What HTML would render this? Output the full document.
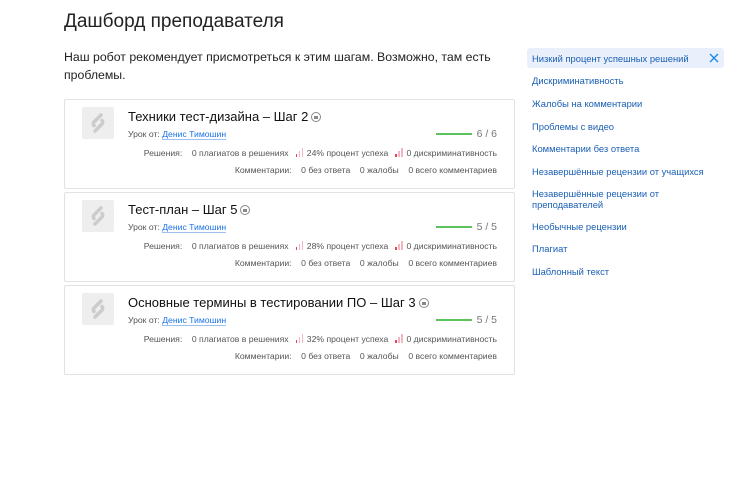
<!DOCTYPE html>
<html><head><meta charset="utf-8"><style>
*{margin:0;padding:0;box-sizing:border-box}
body{width:751px;height:483px;background:#fff;font-family:"Liberation Sans",Arial,sans-serif;color:#222;position:relative;overflow:hidden}
.a{position:absolute;white-space:nowrap}
h1{position:absolute;left:64px;top:11px;font-size:19px;font-weight:normal;color:#222}
.intro{position:absolute;left:64px;top:48px;width:430px;font-size:12.3px;line-height:18px;color:#222}
.card{position:absolute;left:64px;width:451px;height:90px;border:1px solid #e2e2e2;border-radius:2px}
.ic{position:absolute;left:17px;top:7px;width:32px;height:32px;background:#eee;border-radius:2px}
.t{position:absolute;left:63px;top:9px;font-size:13px;color:#111;white-space:nowrap}
.lk{display:inline-block;width:10px;height:10px;border:1px solid #888;border-radius:50%;vertical-align:-1px;margin-left:3px;position:relative}
.lk:after{content:"";position:absolute;left:2px;top:3px;width:4px;height:3px;background:#888}
.s{font-size:8.65px;color:#555}
.au{left:63px;top:29px}
.au span{color:#1a73e8;border-bottom:1px solid #9cc0f0}
.bar{position:absolute;left:371px;top:33px;width:36px;height:2px;background:#5cc25c}
.pr{right:17px;top:28px;font-size:10.5px;color:#777}
.r1{right:17px;top:48px}
.r2{right:17px;top:65px}
.sig{display:inline-block;width:8px;height:9px;position:relative;vertical-align:-1px;margin-right:3px}
.sig i{position:absolute;bottom:0;width:1.5px;background:#f3b6c0}
.sig i.on{background:#e8435a}
.sb{position:absolute;left:532px;font-size:9.4px;color:#1a5fb4;white-space:nowrap;line-height:11px}
</style></head><body>
<h1>Дашборд преподавателя</h1>
<div class="intro">Наш робот рекомендует присмотреться к этим шагам. Возможно, там есть проблемы.</div>

<div class="card" style="top:99px">
<div class="ic"><svg width="32" height="32" viewBox="0 0 32 32"><path d="M19 8l-7 7a2.5 2.5 0 0 0 0 3.5M13 24l7-7a2.5 2.5 0 0 0 0-3.5" fill="none" stroke="#ccc" stroke-width="3.5" stroke-linecap="round"/></svg></div>
<div class="t">Техники тест-дизайна – Шаг 2<span class="lk"></span></div>
<div class="a s au">Урок от: <span>Денис Тимошин</span></div>
<div class="bar"></div><div class="a pr">6 / 6</div>
<div class="a s r1">Решения: &nbsp;&nbsp;&nbsp;0 плагиатов в решениях &nbsp;&nbsp;<span class="sig"><i class="on" style="left:0;height:3px"></i><i style="left:3px;height:6px"></i><i style="left:6px;height:9px"></i></span>24% процент успеха &nbsp;&nbsp;<span class="sig"><i class="on" style="left:0;height:3px"></i><i style="left:3px;height:6px"></i><i style="left:6px;height:9px"></i></span>0 дискриминативность</div>
<div class="a s r2">Комментарии: &nbsp;&nbsp;&nbsp;0 без ответа &nbsp;&nbsp;&nbsp;0 жалобы &nbsp;&nbsp;&nbsp;0 всего комментариев</div>
</div>

<div class="card" style="top:192px">
<div class="ic"><svg width="32" height="32" viewBox="0 0 32 32"><path d="M19 8l-7 7a2.5 2.5 0 0 0 0 3.5M13 24l7-7a2.5 2.5 0 0 0 0-3.5" fill="none" stroke="#ccc" stroke-width="3.5" stroke-linecap="round"/></svg></div>
<div class="t">Тест-план – Шаг 5<span class="lk"></span></div>
<div class="a s au">Урок от: <span>Денис Тимошин</span></div>
<div class="bar"></div><div class="a pr">5 / 5</div>
<div class="a s r1">Решения: &nbsp;&nbsp;&nbsp;0 плагиатов в решениях &nbsp;&nbsp;<span class="sig"><i class="on" style="left:0;height:3px"></i><i style="left:3px;height:6px"></i><i style="left:6px;height:9px"></i></span>28% процент успеха &nbsp;&nbsp;<span class="sig"><i class="on" style="left:0;height:3px"></i><i style="left:3px;height:6px"></i><i style="left:6px;height:9px"></i></span>0 дискриминативность</div>
<div class="a s r2">Комментарии: &nbsp;&nbsp;&nbsp;0 без ответа &nbsp;&nbsp;&nbsp;0 жалобы &nbsp;&nbsp;&nbsp;0 всего комментариев</div>
</div>

<div class="card" style="top:285px">
<div class="ic"><svg width="32" height="32" viewBox="0 0 32 32"><path d="M19 8l-7 7a2.5 2.5 0 0 0 0 3.5M13 24l7-7a2.5 2.5 0 0 0 0-3.5" fill="none" stroke="#ccc" stroke-width="3.5" stroke-linecap="round"/></svg></div>
<div class="t">Основные термины в тестировании ПО – Шаг 3<span class="lk"></span></div>
<div class="a s au">Урок от: <span>Денис Тимошин</span></div>
<div class="bar"></div><div class="a pr">5 / 5</div>
<div class="a s r1">Решения: &nbsp;&nbsp;&nbsp;0 плагиатов в решениях &nbsp;&nbsp;<span class="sig"><i class="on" style="left:0;height:3px"></i><i style="left:3px;height:6px"></i><i style="left:6px;height:9px"></i></span>32% процент успеха &nbsp;&nbsp;<span class="sig"><i class="on" style="left:0;height:3px"></i><i style="left:3px;height:6px"></i><i style="left:6px;height:9px"></i></span>0 дискриминативность</div>
<div class="a s r2">Комментарии: &nbsp;&nbsp;&nbsp;0 без ответа &nbsp;&nbsp;&nbsp;0 жалобы &nbsp;&nbsp;&nbsp;0 всего комментариев</div>
</div>

<div style="position:absolute;left:527px;top:48px;width:197px;height:20px;background:#e9f0fb;border-radius:3px"></div>
<svg style="position:absolute;left:709px;top:53px" width="10" height="10" viewBox="0 0 10 10"><path d="M1 1L9 9M9 1L1 9" stroke="#1a8ae8" stroke-width="1.4"/></svg>
<div class="sb" style="top:53px">Низкий процент успешных решений</div>
<div class="sb" style="top:75px">Дискриминативность</div>
<div class="sb" style="top:98px">Жалобы на комментарии</div>
<div class="sb" style="top:121px">Проблемы с видео</div>
<div class="sb" style="top:143px">Комментарии без ответа</div>
<div class="sb" style="top:166px">Незавершённые рецензии от учащихся</div>
<div class="sb" style="top:188px">Незавершённые рецензии от<br>преподавателей</div>
<div class="sb" style="top:221px">Необычные рецензии</div>
<div class="sb" style="top:243px">Плагиат</div>
<div class="sb" style="top:266px">Шаблонный текст</div>
</body></html>
